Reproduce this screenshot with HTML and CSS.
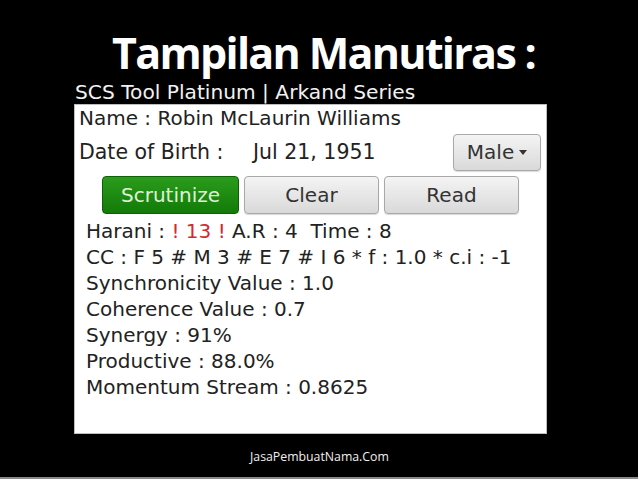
FILE: index.html
```html
<!DOCTYPE html>
<html>
<head>
<meta charset="utf-8">
<link rel="stylesheet" href="styles.css">
</head>
<body>
<div class="slide">
  <h1 class="title">Tampilan Manutiras :</h1>
  <div class="subtitle">SCS Tool Platinum | Arkand Series</div>
  <div class="panel">
    <div class="name">Name : Robin McLaurin Williams</div>
    <div class="dob-row">
      <span class="dob-label">Date of Birth :</span>
      <span class="dob-value">Jul 21, 1951</span>
      <span class="btn gray male">Male<svg class="caret" width="8" height="5" viewBox="0 0 8 5"><path d="M0 0H8L4 5Z" fill="#333"/></svg></span>
    </div>
    <div class="actions">
      <span class="btn green scrutinize">Scrutinize</span>
      <span class="btn gray clear">Clear</span>
      <span class="btn gray read">Read</span>
    </div>
    <div class="results">
      <div class="line">Harani : <span class="red">! 13 !</span> A.R : 4&nbsp; Time : 8</div>
      <div class="line">CC : F 5 # M 3 # E 7 # I 6 * f : 1.0 * c.i : -1</div>
      <div class="line">Synchronicity Value : 1.0</div>
      <div class="line">Coherence Value : 0.7</div>
      <div class="line">Synergy : 91%</div>
      <div class="line">Productive : 88.0%</div>
      <div class="line">Momentum Stream : 0.8625</div>
    </div>
  </div>
  <div class="footer">JasaPembuatNama.Com</div>
</div>
</body>
</html>
```

FILE: styles.css
```css
html, body {
  margin: 0;
  padding: 0;
  background: #000;
}
.slide {
  width: 638px;
  height: 479px;
  background: #000;
  display: flex;
  flex-direction: column;
  box-sizing: border-box;
  border-bottom: 2px solid #8a8a8a;
  overflow: hidden;
}
.title {
  margin: 0;
  height: 80px;
  box-sizing: border-box;
  padding: 29px 0 0 112px;
  font-family: "Open Sans", sans-serif;
  font-weight: 700;
  font-size: 43px;
  line-height: 47px;
  color: #fff;
  letter-spacing: -1.7px;
  white-space: nowrap;
}
.subtitle {
  height: 20px;
  margin-top: 2px;
  margin-bottom: 2px;
  padding-left: 75px;
  font-family: "DejaVu Sans", sans-serif;
  font-size: 20.2px;
  line-height: 20px;
  color: #f2f2f2;
  white-space: nowrap;
}
.panel {
  margin-left: 74px;
  width: 473px;
  height: 330px;
  background: #fff;
  box-sizing: border-box;
  border: 1px solid #bdbdbd;
  font-family: "DejaVu Sans", sans-serif;
  color: #222;
  display: flex;
  flex-direction: column;
}
.name {
  padding-left: 4px;
  font-size: 20px;
  line-height: 26px;
  height: 26px;
}
.dob-row {
  display: flex;
  align-items: center;
  height: 40px;
  margin-top: 1px;
  padding-left: 4px;
  font-size: 20.5px;
}
.dob-label {
  width: 174px;
}
.dob-value {
  flex: 1;
}
.btn {
  display: flex;
  align-items: center;
  justify-content: center;
  box-sizing: border-box;
  border-radius: 4px;
  font-size: 20px;
}
.gray {
  background: linear-gradient(#f4f4f4, #d9d9d9);
  border: 1px solid #a8a8a8;
  color: #333;
  box-shadow: 0 1px 1px rgba(0,0,0,0.15);
}
.green {
  background: linear-gradient(#2a9c1c, #137a08);
  border: 1px solid #0f5f06;
  color: #dff3d6;
}
.male {
  width: 88px;
  height: 37px;
  margin-right: 5px;
  gap: 5px;
}
.caret {
  margin-top: 1px;
}
.actions {
  display: flex;
  gap: 5px;
  padding-left: 27px;
  height: 38px;
  margin-top: 4px;
}
.scrutinize { width: 137px; }
.clear { width: 135px; }
.read { width: 135px; }
.results {
  padding-left: 11px;
  margin-top: 4px;
  font-size: 20px;
}
.line {
  height: 26px;
  line-height: 26px;
  white-space: nowrap;
}
.red {
  color: #d42a2a;
}
.footer {
  padding-left: 250px;
  margin-top: 14px;
  font-family: "Open Sans", sans-serif;
  font-size: 12.3px;
  color: #f0f0f0;
  line-height: 18px;
}
```
